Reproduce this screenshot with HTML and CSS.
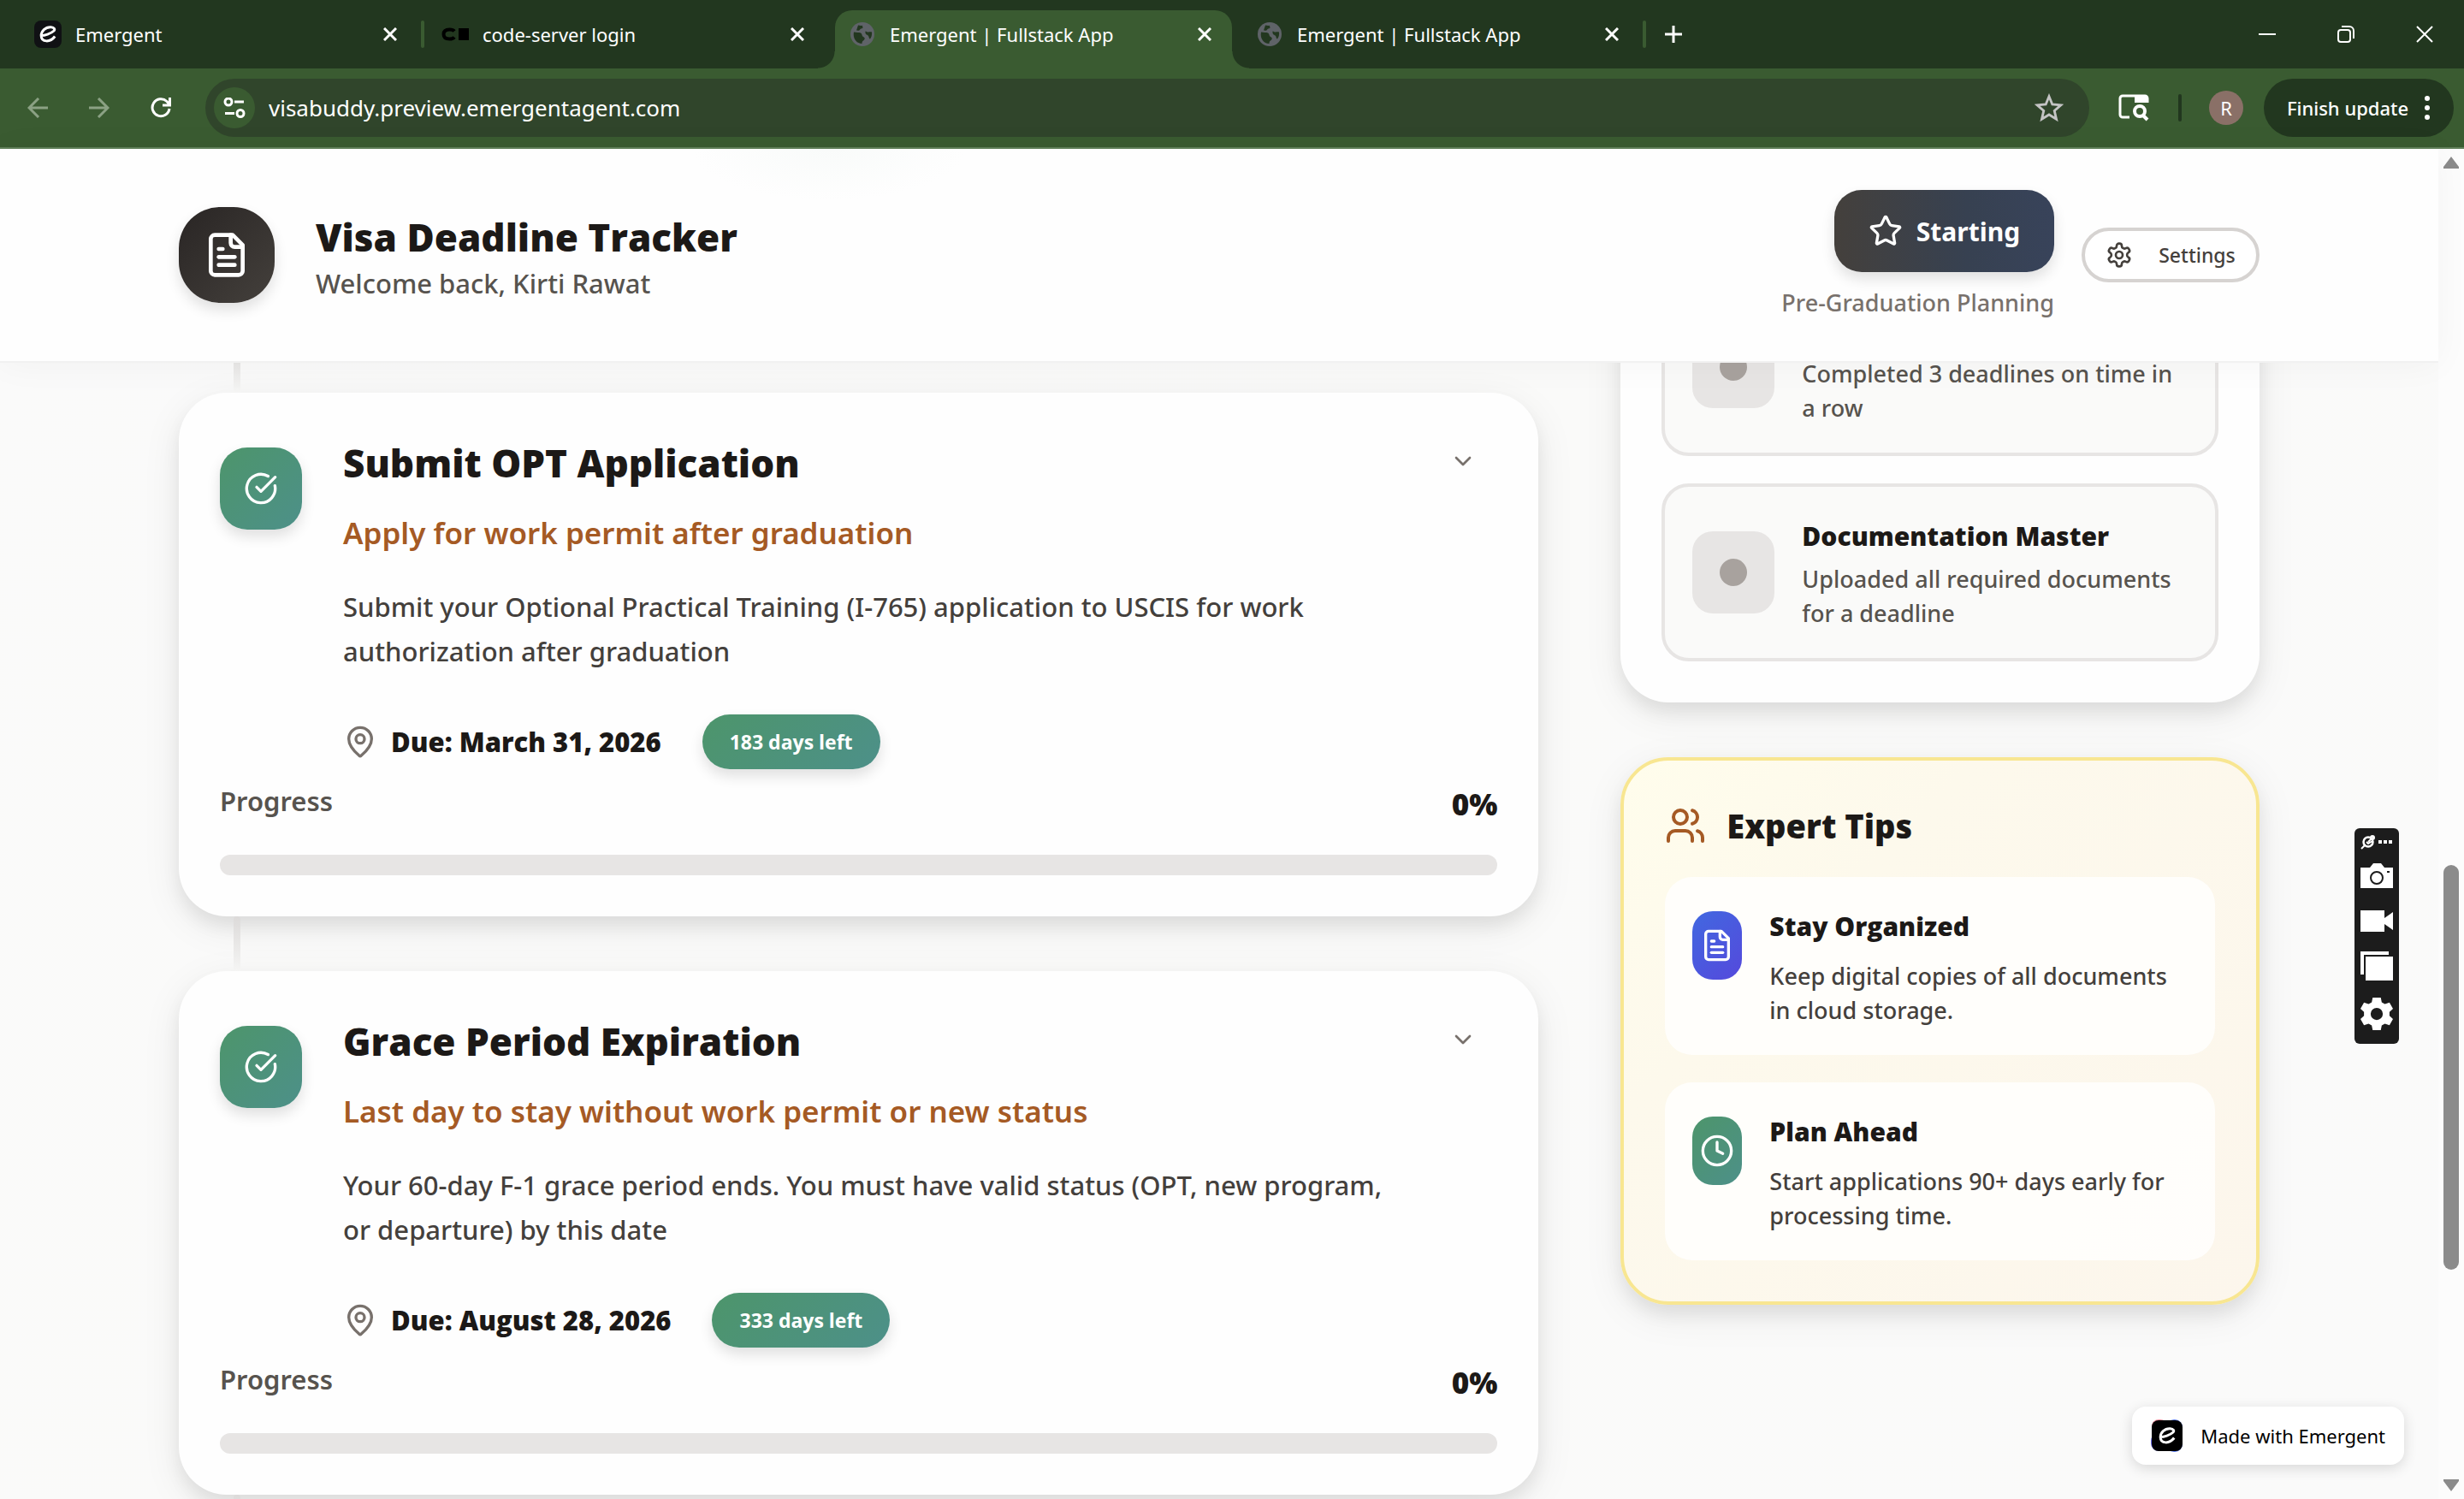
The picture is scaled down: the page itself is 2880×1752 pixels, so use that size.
FILE: index.html
```html
<!DOCTYPE html>
<html lang="en">
<head>
<meta charset="utf-8">
<title>Emergent | Fullstack App</title>
<link rel="stylesheet" href="styles.css">
</head>
<body>
<svg class="defs" aria-hidden="true">
  <symbol id="i-file" viewBox="0 0 24 24"><path d="M15 2H6a2 2 0 0 0-2 2v16a2 2 0 0 0 2 2h12a2 2 0 0 0 2-2V7Z"/><path d="M14 2v4a2 2 0 0 0 2 2h4"/><path d="M10 9H8"/><path d="M16 13H8"/><path d="M16 17H8"/></symbol>
  <symbol id="i-check" viewBox="0 0 24 24"><path d="M21.801 10A10 10 0 1 1 17 3.335"/><path d="m9 11 3 3L22 4"/></symbol>
  <symbol id="i-pin" viewBox="0 0 24 24"><path d="M20 10c0 4.993-5.539 10.193-7.399 11.799a1 1 0 0 1-1.202 0C9.539 20.193 4 14.993 4 10a8 8 0 0 1 16 0"/><circle cx="12" cy="10" r="3"/></symbol>
  <symbol id="i-gear" viewBox="0 0 24 24"><path d="M12.22 2h-.44a2 2 0 0 0-2 2v.18a2 2 0 0 1-1 1.73l-.43.25a2 2 0 0 1-2 0l-.15-.08a2 2 0 0 0-2.73.73l-.22.38a2 2 0 0 0 .73 2.73l.15.1a2 2 0 0 1 1 1.72v.51a2 2 0 0 1-1 1.74l-.15.09a2 2 0 0 0-.73 2.73l.22.38a2 2 0 0 0 2.73.73l.15-.08a2 2 0 0 1 2 0l.43.25a2 2 0 0 1 1 1.73V20a2 2 0 0 0 2 2h.44a2 2 0 0 0 2-2v-.18a2 2 0 0 1 1-1.73l.43-.25a2 2 0 0 1 2 0l.15.08a2 2 0 0 0 2.73-.73l.22-.39a2 2 0 0 0-.73-2.73l-.15-.08a2 2 0 0 1-1-1.74v-.5a2 2 0 0 1 1-1.74l.15-.09a2 2 0 0 0 .73-2.73l-.22-.38a2 2 0 0 0-2.73-.73l-.15.08a2 2 0 0 1-2 0l-.43-.25a2 2 0 0 1-1-1.73V4a2 2 0 0 0-2-2z"/><circle cx="12" cy="12" r="3"/></symbol>
  <symbol id="i-star" viewBox="0 0 24 24"><path d="M11.525 2.295a.53.53 0 0 1 .95 0l2.31 4.679a2.123 2.123 0 0 0 1.595 1.16l5.166.756a.53.53 0 0 1 .294.904l-3.736 3.638a2.123 2.123 0 0 0-.611 1.878l.882 5.14a.53.53 0 0 1-.771.56l-4.618-2.428a2.122 2.122 0 0 0-1.973 0L6.396 21.01a.53.53 0 0 1-.77-.56l.881-5.139a2.122 2.122 0 0 0-.611-1.879L2.16 9.795a.53.53 0 0 1 .294-.906l5.165-.755a2.122 2.122 0 0 0 1.597-1.16z"/></symbol>
  <symbol id="i-users" viewBox="0 0 24 24"><path d="M16 21v-2a4 4 0 0 0-4-4H6a4 4 0 0 0-4 4v2"/><circle cx="9" cy="7" r="4"/><path d="M22 21v-2a4 4 0 0 0-3-3.87"/><path d="M16 3.13a4 4 0 0 1 0 7.75"/></symbol>
  <symbol id="i-clock" viewBox="0 0 24 24"><circle cx="12" cy="12" r="10"/><path d="M12 6v6l4 2"/></symbol>
  <symbol id="i-chevron" viewBox="0 0 24 24"><path d="m6 9 6 6 6-6"/></symbol>
  <symbol id="i-x" viewBox="0 0 16 16"><path d="M1 1l14 14M15 1L1 15"/></symbol>
  <symbol id="i-globe" viewBox="0 0 28 28"><circle cx="14" cy="14" r="14" fill="#5f6368" stroke="none"/><path class="globe-land" d="M4 11.500c3 .5 6 .3 8 1 2 .8 1 3.500 3 4.500 2.500 1 2 3.500 0 4.500-1.500.8-1.500 2.500-1.500 3.500C7 25 2.500 19 4 11.500zM9 3.500c1.500 0 3 1 5 .2l.5 3c-1.500.8-3 .5-3.500 2-.5 1.300-2.500 1-4 .800zM17.500 10.500c1.500 0 2 1.500 3.500 1 1.500-.5 3-.5 4 0 .3 3-.2 6-2 8-1.500 0-1-3-2.500-4-1.300-1-3.500-1-3-5z"/></symbol>
  <symbol id="i-e" viewBox="0 0 32 32"><path d="M7.500 17.500c4.500.3 12-2.200 15.500-5.500 1.500-1.500.500-4-3.500-4.300C13 7.300 8 12.500 8.200 18c.2 7.500 10.500 8 16 .5"/></symbol>
</svg>

<div class="browser">
  <div class="tabstrip">
    <div class="tab">
      <svg class="fav" viewBox="0 0 32 32"><rect width="32" height="32" rx="8" fill="#101114"/><g fill="none" stroke="#fff" stroke-width="3"><use href="#i-e"/></g></svg>
      <span class="tab-name">Emergent</span>
      <button class="tab-close" aria-label="Close tab"><svg><use href="#i-x"/></svg></button>
    </div>
    <span class="tab-sep"></span>
    <div class="tab tab-second">
      <svg class="fav" viewBox="0 0 32 32"><path d="M15 12.500C13.500 10.500 11.500 10.500 9.500 10.500 5 10.500 2.500 12.500 2.500 16s2.500 5.500 7 5.500c2 0 4 0 5.500-2" fill="none" stroke="#000" stroke-width="4"/><path d="M20 9h12v14H20z"/></svg>
      <span class="tab-name">code-server login</span>
      <button class="tab-close" aria-label="Close tab"><svg><use href="#i-x"/></svg></button>
    </div>
    <div class="tab tab-active">
      <svg class="fav-globe"><use href="#i-globe"/></svg>
      <span class="tab-name">Emergent | Fullstack App</span>
      <button class="tab-close" aria-label="Close tab"><svg><use href="#i-x"/></svg></button>
    </div>
    <div class="tab tab-fourth">
      <svg class="fav-globe"><use href="#i-globe"/></svg>
      <span class="tab-name">Emergent | Fullstack App</span>
      <button class="tab-close" aria-label="Close tab"><svg><use href="#i-x"/></svg></button>
    </div>
    <span class="tab-sep tab-sep-last"></span>
    <button class="new-tab" aria-label="New tab"><svg viewBox="0 0 20 20"><path d="M10 0v20M0 10h20"/></svg></button>
    <div class="window-buttons">
      <button aria-label="Minimize"><svg viewBox="0 0 20 20"><path d="M0 10h20"/></svg></button>
      <button aria-label="Restore"><svg viewBox="0 0 20 20"><rect x="1" y="5" width="14" height="14" rx="3"/><path d="M5 1h9a5 5 0 0 1 5 5v9"/></svg></button>
      <button aria-label="Close"><svg viewBox="0 0 20 20"><path d="M1 1l18 18M19 1L1 19"/></svg></button>
    </div>
  </div>

  <div class="toolbar">
    <button class="nav dim" aria-label="Back"><svg viewBox="0 0 24 24"><path d="M24 12H2M13 1L2 12l11 11"/></svg></button>
    <button class="nav dim" aria-label="Forward"><svg viewBox="0 0 24 24"><path d="M0 12h22M11 1l11 11-11 11"/></svg></button>
    <button class="nav" aria-label="Reload"><svg viewBox="0 0 24 24"><path d="M22 13a10 10 0 1 1-3-8.500L22 8M22.500 0v9H14"/></svg></button>
    <div class="urlbar">
      <button class="site-info" aria-label="Site information"><svg viewBox="0 0 26 24"><circle cx="6" cy="5" r="4"/><path d="M13 5h11M2 18.500h11"/><circle cx="20" cy="18.500" r="4"/></svg></button>
      <input class="url" type="text" aria-label="Address" value="visabuddy.preview.emergentagent.com">
      <button class="bookmark" aria-label="Bookmark"><svg viewBox="0 0 24 24"><path d="M12 2.600l2.700 6.600 7 .600-5.300 4.600 1.600 6.900-6-3.700-6 3.700 1.600-6.900L2.300 9.800l7-.600z"/></svg></button>
    </div>
    <button class="lens" aria-label="Search with Lens"><svg viewBox="0 0 36 32"><path d="M13 27H5a3 3 0 0 1-3-3V5a3 3 0 0 1 3-3h26a3 3 0 0 1 3 3v5" stroke-width="3"/><path d="M19 2h15v8H19z" fill="#fff" stroke="none"/><circle cx="25" cy="20" r="6"/><path d="M29 25l5 5"/></svg></button>
    <span class="tool-sep"></span>
    <span class="avatar">R</span>
    <button class="update">Finish update<svg viewBox="0 0 8 32"><circle cx="4" cy="5" r="3"/><circle cx="4" cy="16" r="3"/><circle cx="4" cy="27" r="3"/></svg></button>
  </div>

  <div class="page">
    <div class="app">
      <header class="app-header">
        <div class="container header-row">
          <div class="brand">
            <span class="brand-icon"><svg class="ic"><use href="#i-file"/></svg></span>
            <div class="brand-text">
              <h1>Visa Deadline Tracker</h1>
              <p class="welcome">Welcome back, Kirti Rawat</p>
            </div>
          </div>
          <div class="header-actions">
            <div class="stage">
              <div class="stage-badge"><svg class="ic"><use href="#i-star"/></svg>Starting</div>
              <p>Pre-Graduation Planning</p>
            </div>
            <button class="settings"><svg class="ic"><use href="#i-gear"/></svg>Settings</button>
          </div>
        </div>
      </header>

      <main>
        <div class="container columns">
          <section class="timeline">
            <article class="card deadline">
              <div class="deadline-head">
                <span class="tile green"><svg class="ic"><use href="#i-check"/></svg></span>
                <div class="deadline-body">
                  <h2>Submit OPT Application</h2>
                  <h3>Apply for work permit after graduation</h3>
                  <p class="desc">Submit your Optional Practical Training (I-765) application to USCIS for work<br>authorization after graduation</p>
                  <div class="due"><svg class="ic"><use href="#i-pin"/></svg><span class="due-date">Due: March 31, 2026</span><span class="pill green">183 days left</span></div>
                </div>
                <button class="expand" aria-label="Expand"><svg class="ic"><use href="#i-chevron"/></svg></button>
              </div>
              <div class="progress-row"><label for="p1">Progress</label><span>0%</span></div>
              <progress id="p1" max="100" value="0"></progress>
            </article>
            <article class="card deadline">
              <div class="deadline-head">
                <span class="tile green"><svg class="ic"><use href="#i-check"/></svg></span>
                <div class="deadline-body">
                  <h2>Grace Period Expiration</h2>
                  <h3>Last day to stay without work permit or new status</h3>
                  <p class="desc">Your 60-day F-1 grace period ends. You must have valid status (OPT, new program,<br>or departure) by this date</p>
                  <div class="due"><svg class="ic"><use href="#i-pin"/></svg><span class="due-date">Due: August 28, 2026</span><span class="pill green">333 days left</span></div>
                </div>
                <button class="expand" aria-label="Expand"><svg class="ic"><use href="#i-chevron"/></svg></button>
              </div>
              <div class="progress-row"><label for="p2">Progress</label><span>0%</span></div>
              <progress id="p2" max="100" value="0"></progress>
            </article>
          </section>

          <aside class="side">
            <section class="card achievements">
              <div class="achievement">
                <span class="tile muted"><i></i></span>
                <div class="achievement-text"><p>Completed 3 deadlines on time in<br>a row</p></div>
              </div>
              <div class="achievement">
                <span class="tile muted"><i></i></span>
                <div class="achievement-text"><h4>Documentation Master</h4><p>Uploaded all required documents<br>for a deadline</p></div>
              </div>
            </section>

            <section class="card tips">
              <h2><svg class="ic"><use href="#i-users"/></svg>Expert Tips</h2>
              <div class="tip">
                <span class="tip-icon blue"><svg class="ic"><use href="#i-file"/></svg></span>
                <div class="tip-text"><h4>Stay Organized</h4><p>Keep digital copies of all documents<br>in cloud storage.</p></div>
              </div>
              <div class="tip">
                <span class="tip-icon green"><svg class="ic"><use href="#i-clock"/></svg></span>
                <div class="tip-text"><h4>Plan Ahead</h4><p>Start applications 90+ days early for<br>processing time.</p></div>
              </div>
            </section>
          </aside>
        </div>
      </main>

      <a class="made" href="#"><svg viewBox="0 0 38 38"><rect x="1" y="0" width="18" height="20" rx="8" fill="#f08a9a"/><rect x="18" y="0" width="19" height="38" rx="9" fill="#5b7cf0"/><rect x="0" y="16" width="24" height="21" rx="9" fill="#6a6ae8"/><rect x="1" y="1" width="36" height="36" rx="8"/><g transform="translate(3 3)" fill="none" stroke="#fff" stroke-width="3"><use href="#i-e" width="32" height="32"/></g></svg>Made with Emergent</a>

      <div class="recorder">
        <div class="recorder-top"><svg viewBox="0 0 18 18"><path d="M1 17l4-4" stroke-width="2"/><circle cx="9" cy="9" r="5.500" stroke-width="2.500"/><path d="M9 9l6-6M7 9l2 2 5-3" stroke-width="2"/><circle cx="14" cy="4" r="2" stroke-width="2"/></svg><svg viewBox="0 0 18 18"><path d="M1 9h16" stroke-width="4" stroke-dasharray="4 2"/></svg></div>
        <button class="shot" aria-label="Screenshot"><svg viewBox="0 0 38 30"><path fill="#fff" stroke="none" d="M0 6h11l4-5h9l4 5h10v24H0z"/><circle cx="19" cy="18" r="7" stroke="#1c1c1c" stroke-width="2"/><path d="M31 11h3" stroke="#1c1c1c" stroke-width="2"/></svg></button>
        <button aria-label="Record"><svg viewBox="0 0 38 30"><path fill="#fff" stroke="none" d="M0 2h28v9l10-7v21l-10-7v9H0z"/></svg></button>
        <button aria-label="Gallery"><svg viewBox="0 0 38 34"><path fill="#fff" stroke="none" d="M0 0h33v4H4v23H0zM6 6h32v28H6z"/></svg></button>
        <button aria-label="Recorder settings"><svg viewBox="0 0 24 24"><path fill="#fff" stroke="none" fill-rule="evenodd" d="M9 0h6l.7 3.500 2.300 1.300 3.400-1.200 2.600 4.600-2.600 2.400v2.800l2.600 2.400-2.600 4.600-3.400-1.200-2.300 1.300L15 24H9l-.7-3.500L6 19.200l-3.400 1.200L0 15.800l2.600-2.400v-2.800L0 8.200l2.600-4.600L6 4.800l2.300-1.300zM12 7.500a4.500 4.500 0 1 0 0 9 4.500 4.500 0 1 0 0-9z"/></svg></button>
      </div>
    </div>
    <div class="scrollbar">
      <svg viewBox="0 0 18 14"><path d="M9 0l9 12a1 1 0 0 1-1 2H1a1 1 0 0 1-1-2z"/></svg>
      <div class="thumb"></div>
      <svg viewBox="0 0 18 14"><path d="M9 14l9-12a1 1 0 0 0-1-2H1a1 1 0 0 0-1 2z"/></svg>
    </div>
  </div>
</div>
</body>
</html>
```
FILE: styles.css
```css
:root {
  --strip: #22371f;
  --bar: #3a5b31;
  --ink: #1c1917;
  --ink-2: #44403c;
  --ink-3: #57534e;
  --ink-4: #78716c;
  --line: #e7e5e4;
  --title: 44px;
  --text: 31px;
  --small: 27px;
  --label: 22px;
  --heavy: "Open Sans", "Noto Sans", sans-serif;
}
* { box-sizing: border-box; }
body {
  margin: 0;
  font-family: "Noto Sans", "Open Sans", sans-serif;
  font-weight: 500;
  color: var(--ink);
}
h1, h2, h3, h4, p { margin: 0; }
h1, h2, h4, .due-date, .pill, .progress-row span { font-family: var(--heavy); font-weight: 800; }
button {
  font: inherit;
  color: inherit;
  border: 0;
  padding: 0;
  background: none;
  display: flex;
  align-items: center;
  justify-content: center;
}
svg { display: block; flex: none; }
.defs { position: absolute; width: 0; height: 0; }
.ic {
  fill: none;
  stroke: currentColor;
  stroke-width: 2;
  stroke-linecap: round;
  stroke-linejoin: round;
}

/* browser frame */
.browser { height: 100vh; display: flex; flex-direction: column; overflow: hidden; }
.tabstrip {
  height: 80px;
  flex: none;
  display: flex;
  align-items: center;
  background: var(--strip);
  color: #fff;
  font-size: var(--label);
  font-weight: 400;
}
.tab { display: flex; align-items: center; width: 464px; padding-left: 40px; }
.tab-name { flex: 1; }
.fav { width: 32px; height: 32px; margin-right: 16px; }
.fav-globe { width: 28px; height: 28px; margin-right: 18px; }
.globe-land { fill: var(--strip); }
.tab-active .globe-land { fill: var(--bar); }
.tab-close svg, .new-tab svg, .window-buttons svg, .nav svg {
  fill: none;
  stroke: currentColor;
  stroke-width: 3;
}
.tab-close svg { width: 16px; height: 16px; }
.tab:first-child { width: 492px; padding-right: 28px; }
.tab-sep { width: 4px; height: 32px; border-radius: 2px; background: var(--bar); }
.tab-second { width: 480px; padding: 0 36px 0 20px; }
.tab-active {
  position: relative;
  align-self: flex-end;
  width: 464px;
  height: 68px;
  padding: 0 24px 12px 18px;
  background: var(--bar);
  border-radius: 20px 20px 0 0;
}
.tab-active::before, .tab-active::after {
  content: "";
  position: absolute;
  bottom: 0;
  width: 20px;
  height: 20px;
}
.tab-active::before { left: -20px; background: radial-gradient(circle at 0 0, transparent 19px, var(--bar) 20px); }
.tab-active::after { right: -20px; background: radial-gradient(circle at 100% 0, transparent 19px, var(--bar) 20px); }
.tab-fourth { width: 480px; padding: 0 28px 0 30px; }
.new-tab { margin-left: 22px; }
.new-tab svg, .window-buttons svg { width: 20px; height: 20px; }
.window-buttons { display: flex; margin-left: auto; }
.window-buttons button { width: 92px; }
.window-buttons svg { stroke-width: 2; }

.toolbar {
  height: 94px;
  flex: none;
  display: flex;
  align-items: center;
  padding: 0 12px 2px 32px;
  background: linear-gradient(var(--bar), var(--bar)) 0 0 / 100% 92px no-repeat #61805a;
  color: #fff;
}
.nav { width: 24px; margin-right: 48px; }
.nav:nth-child(3) { margin-right: 40px; }
.nav svg { width: 24px; height: 24px; }
.dim { color: #8ba184; }
.urlbar {
  flex: 1;
  height: 68px;
  display: flex;
  align-items: center;
  padding: 0 30px 0 10px;
  border-radius: 34px;
  background: #30452b;
}
.site-info { width: 48px; height: 48px; border-radius: 50%; background: var(--bar); }
.site-info svg { width: 26px; height: 24px; fill: none; stroke: #fff; stroke-width: 3; }
.url {
  flex: 1;
  height: 48px;
  border: 0;
  padding: 0 16px;
  background: none;
  color: #fff;
  font: inherit;
  font-size: 26px;
  font-weight: 400;
}
.bookmark svg { width: 34px; height: 34px; fill: none; stroke: #c4c4c4; stroke-width: 2; }
.lens { margin-left: 34px; }
.lens svg { width: 36px; height: 32px; fill: none; stroke: #fff; stroke-width: 4; }
.tool-sep { width: 4px; height: 32px; margin: 0 32px 0 34px; border-radius: 2px; background: var(--strip); }
.avatar {
  width: 40px;
  height: 40px;
  border-radius: 50%;
  background: #8a7067;
  font-size: var(--label);
  font-weight: 400;
  line-height: 40px;
  text-align: center;
}
.update {
  width: 222px;
  height: 68px;
  margin-left: 24px;
  gap: 18px;
  border-radius: 34px;
  background: var(--strip);
  font-size: var(--label);
}
.update svg { width: 8px; height: 32px; fill: #fff; }

/* page viewport */
.page { flex: 1; min-height: 0; display: flex; }
.app {
  position: relative;
  flex: 1;
  display: flex;
  flex-direction: column;
  background: linear-gradient(135deg, #fafafa, #fafaf9 50%, #fafafa);
}
.container { width: 100%; max-width: 2432px; margin: 0 auto; }
.app-header {
  flex: none;
  border-bottom: 2px solid #f1f1f1;
  background: radial-gradient(ellipse 160px 60px at 34% 0, #f9fbfa, transparent) #fefefe;
  box-shadow: 0 2px 40px rgba(0, 0, 0, 0.04);
  z-index: 1;
}
.header-row { display: flex; justify-content: space-between; align-items: center; height: 248px; }
.brand { display: flex; align-items: center; gap: 48px; }
.brand-icon {
  width: 112px;
  height: 112px;
  display: grid;
  place-items: center;
  border-radius: 48px;
  background: linear-gradient(135deg, #292524, #44403c);
  color: #fff;
  box-shadow: 0 8px 16px rgba(0, 0, 0, 0.12);
}
.brand-icon svg { width: 56px; height: 56px; }
.brand-text { padding-top: 6px; }
h1 { font-size: var(--title); line-height: 60px; }
.welcome { font-size: var(--text); line-height: 48px; color: var(--ink-3); }
.header-actions { display: flex; align-items: center; gap: 32px; }
.stage { text-align: right; }
.stage-badge {
  width: 257px;
  height: 96px;
  margin-left: auto;
  display: flex;
  align-items: center;
  justify-content: center;
  gap: 16px;
  border-radius: 32px;
  background: linear-gradient(90deg, #44403c, #374151 60%, #38435a);
  color: #fff;
  font-size: 30px;
  font-weight: 700;
  box-shadow: 0 8px 16px rgba(0, 0, 0, 0.12);
}
.stage-badge svg { width: 40px; height: 40px; }
.stage p { margin-top: 16px; font-size: var(--small); line-height: 40px; color: var(--ink-4); }
.settings {
  width: 208px;
  height: 64px;
  gap: 30px;
  border: 4px solid #d6d3d1;
  border-radius: 32px;
  background: #fff;
  color: var(--ink-2);
  font-size: 23px;
}
.settings svg { width: 32px; height: 32px; }

main { flex: 1; min-height: 0; overflow: hidden; }
.columns { display: grid; grid-template-columns: repeat(3, minmax(0, 1fr)); gap: 96px; }
.card {
  border-radius: 56px;
  background: #fefefe;
  box-shadow: 0 12px 48px rgba(0, 0, 0, 0.07), 0 12px 20px rgba(0, 0, 0, 0.07);
}
.timeline {
  grid-column: span 2;
  display: flex;
  flex-direction: column;
  gap: 64px;
  padding: 35px 0 64px;
}
.deadline { position: relative; padding: 52px 48px 48px; }
.deadline::before, .deadline:last-child::after {
  content: "";
  position: absolute;
  bottom: 100%;
  left: 64px;
  width: 8px;
  height: 64px;
  border-radius: 4px 4px 0 0;
  background: linear-gradient(#dcdad9, #f5f5f4);
}
.deadline:last-child::after { top: 100%; }
.deadline-head { display: flex; align-items: flex-start; }
.tile {
  flex: none;
  width: 96px;
  height: 96px;
  display: grid;
  place-items: center;
  border-radius: 32px;
}
.green { background: linear-gradient(135deg, #4d956b, #4d9089); color: #fff; }
.blue { background: linear-gradient(135deg, #4168e0, #5549dc); color: #fff; }
.deadline .tile { margin: 12px 48px 0 0; box-shadow: 0 8px 16px rgba(0, 0, 0, 0.12); }
.deadline .tile svg { width: 40px; height: 40px; }
.deadline-body { flex: 1; }
.deadline h2 { font-size: var(--title); line-height: 60px; }
.deadline h3 { margin-top: 24px; font-size: 35px; font-weight: 600; line-height: 56px; color: #a55a24; }
.desc { margin-top: 32px; font-size: var(--text); line-height: 52px; color: var(--ink-2); }
.due { display: flex; align-items: center; margin-top: 48px; }
.due svg { width: 40px; height: 40px; color: var(--ink-4); }
.due-date { margin: 0 48px 0 16px; font-size: var(--text); }
.pill {
  height: 64px;
  padding: 0 32px;
  border-radius: 32px;
  font-size: 23px;
  font-weight: 700;
  line-height: 64px;
  box-shadow: 0 8px 16px rgba(0, 0, 0, 0.12);
}
.expand { margin: 12px 24px 0 0; color: var(--ink-4); }
.expand svg { width: 32px; height: 32px; }
.progress-row {
  display: flex;
  justify-content: space-between;
  align-items: flex-start;
  padding: 15px 0 33px;
}
.progress-row label { font-size: var(--text); font-weight: 600; line-height: 44px; color: var(--ink-3); }
.progress-row span { font-size: 35px; line-height: 52px; }
progress {
  display: block;
  width: 100%;
  height: 24px;
  border: 0;
  border-radius: 12px;
  overflow: hidden;
  appearance: none;
  background: var(--line);
}
progress::-webkit-progress-bar { background: var(--line); }

.side { display: flex; flex-direction: column; gap: 64px; }
.achievements {
  display: flex;
  flex-direction: column;
  gap: 32px;
  margin-top: -99px;
  padding: 0 48px 48px;
}
.achievement {
  height: 208px;
  display: flex;
  align-items: center;
  gap: 32px;
  padding: 0 32px;
  border: 4px solid var(--line);
  border-radius: 32px;
  background: #fafaf9;
}
.muted { background: var(--line); border-radius: 24px; }
.muted i { width: 32px; height: 32px; border-radius: 50%; background: #a8a29e; }
.achievement-text { display: flex; flex-direction: column; justify-content: flex-end; height: 136px; }
h4 { font-size: 30px; line-height: 44px; }
.achievement p, .tip p { font-size: var(--small); line-height: 40px; color: var(--ink-3); }
.achievement h4 { margin-bottom: 8px; }

.tips {
  display: flex;
  flex-direction: column;
  gap: 32px;
  padding: 48px;
  border: 4px solid #f8e691;
  background: linear-gradient(135deg, #fffdec, #fdf9ec 30%, #fcf6ec);
}
.tips h2 { display: flex; align-items: center; gap: 24px; font-size: 38px; line-height: 56px; }
.tips h2 svg { width: 48px; height: 48px; color: #a55a24; }
.tip {
  display: flex;
  align-items: flex-start;
  gap: 32px;
  height: 208px;
  padding: 32px;
  border-radius: 32px;
  background: rgba(255, 255, 255, 0.8);
}
.tip-icon {
  flex: none;
  width: 58px;
  height: 80px;
  margin-top: 8px;
  display: grid;
  place-items: center;
  border-radius: 24px;
}
.tip-icon svg { width: 40px; height: 40px; }
.tip-text { padding-top: 4px; }
.tip h4 { margin-bottom: 16px; }
.tip p { color: var(--ink-2); }

/* floating items over the page */
.made {
  position: absolute;
  right: 40px;
  bottom: 40px;
  height: 68px;
  display: flex;
  align-items: center;
  gap: 20px;
  padding: 0 22px;
  border-radius: 16px;
  background: #fff;
  color: #000;
  font-size: var(--label);
  font-weight: 400;
  text-decoration: none;
  box-shadow: 0 4px 16px rgba(0, 0, 0, 0.14);
}
.made svg { width: 38px; height: 38px; }
.recorder {
  position: absolute;
  right: 46px;
  top: 794px;
  width: 52px;
  height: 252px;
  padding: 7px;
  display: flex;
  flex-direction: column;
  gap: 20px;
  border-radius: 6px;
  background: #1c1c1c;
}
.recorder-top { display: flex; justify-content: space-between; height: 13px; }
.shot { margin-bottom: 4px; }
.recorder svg { width: 38px; fill: none; stroke: #fff; }
.recorder .recorder-top svg { width: 18px; height: 18px; }

.scrollbar {
  width: 30px;
  display: flex;
  flex-direction: column;
  align-items: center;
  padding: 9px 0;
  background: #fcfcfc;
}
.scrollbar svg { width: 18px; height: 14px; fill: #8b8b8b; }
.thumb { width: 18px; height: 473px; margin: auto 0 245px; border-radius: 9px; background: #8b8b8b; }
```
